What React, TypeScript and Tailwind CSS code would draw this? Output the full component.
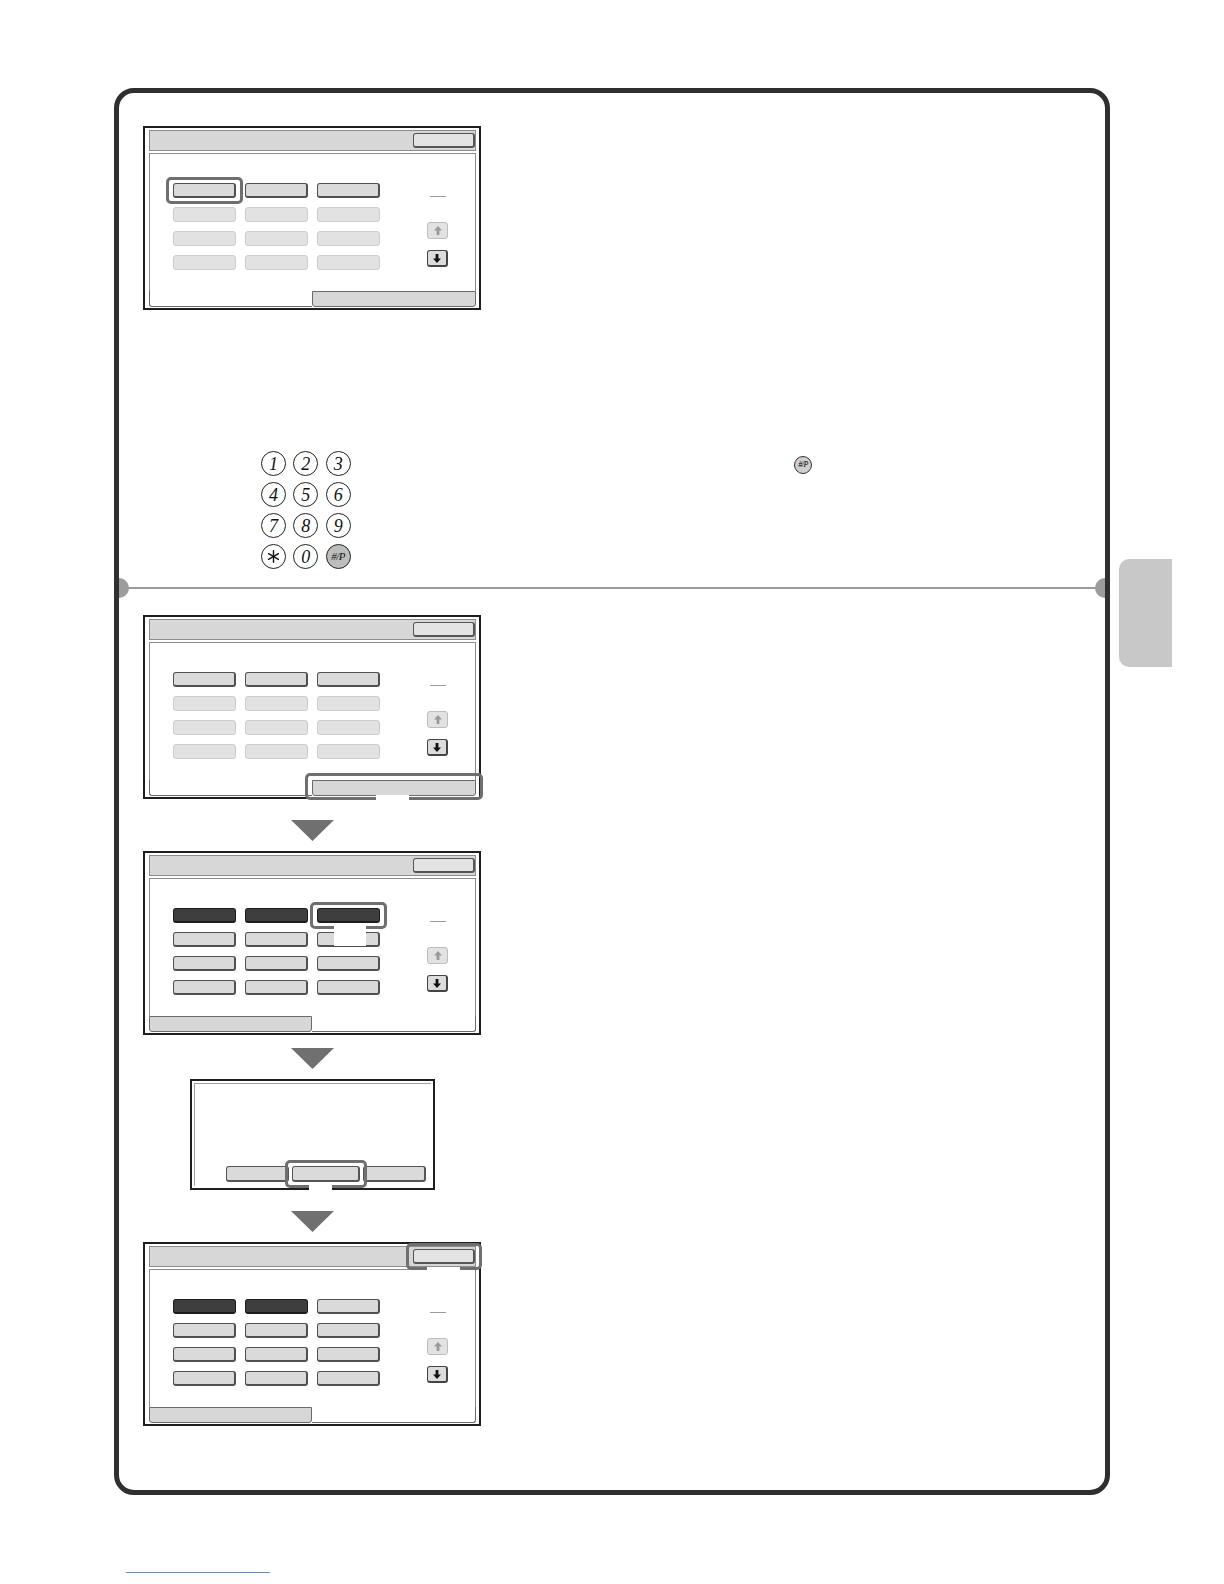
import React from 'react';

type BtnKind = 'normal' | 'faded' | 'dark';
type Highlight = 'none' | 'first' | 'third' | 'tab' | 'header';

const serif = { fontFamily: '"Liberation Serif", "DejaVu Serif", serif' };

function Arrow({ dir, faded }: { dir: 'up' | 'down'; faded?: boolean }) {
  const color = faded ? '#9a9a9a' : '#111';
  return (
    <svg width="8" height="9" viewBox="0 0 8 9" className="block">
      {dir === 'up' ? (
        <path d="M4 0 L8 4.5 H5.4 V9 H2.6 V4.5 H0 Z" fill={color} />
      ) : (
        <path d="M4 9 L8 4.5 H5.4 V0 H2.6 V4.5 H0 Z" fill={color} />
      )}
    </svg>
  );
}

function Key({ kind }: { kind: BtnKind }) {
  if (kind === 'dark')
    return <div className="h-[15px] w-[63px] rounded-[3px] border border-[#1c1c1c] border-b-2 bg-[#3e3e3e]" />;
  if (kind === 'faded')
    return <div className="h-[15px] w-[63px] rounded-[3px] border border-[#cdcdcd] bg-[#e2e2e2]" />;
  return <div className="h-[15px] w-[63px] rounded-[3px] border border-[#505050] border-b-2 border-r-2 bg-[#dadada]" />;
}

function HighlightBox({ gap }: { gap?: { left: number; width: number } }) {
  return (
    <>
      <div className="pointer-events-none absolute -inset-x-[7px] -inset-y-[6px] z-10 rounded-[5px] border-[3px] border-[#6f6f6f]" />
      {gap && (
        <div
          className="absolute -bottom-[10px] z-10 h-[7px] bg-white"
          style={{ left: gap.left, width: gap.width }}
        />
      )}
    </>
  );
}

function Screen({
  rows,
  leftTabActive,
  highlight = 'none',
}: {
  rows: BtnKind[][];
  leftTabActive: boolean;
  highlight?: Highlight;
}) {
  return (
    <div className="flex h-[184px] w-[338px] flex-col border-2 border-[#1e1e1e] bg-white pb-[1px] pl-[4px] pr-[3px] pt-[2px]">
      {/* title bar */}
      <div className="flex h-[21px] shrink-0 items-center justify-end border border-[#8c8c8c] bg-[#d7d7d7]">
        <div className="relative">
          <div className="h-[15px] w-[62px] rounded-[3px] border border-[#555] border-b-2 border-r-2 bg-[#e3e3e3]" />
          {highlight === 'header' && <HighlightBox gap={{ left: 14, width: 33 }} />}
        </div>
      </div>
      {/* content */}
      <div className="mt-[2px] flex flex-1 items-start border-x border-t border-[#8c8c8c] pl-[23px] pt-[29px]">
        <div className="flex flex-col gap-[9px]">
          {rows.map((row, r) => (
            <div key={r} className="flex gap-[9px]">
              {row.map((k, c) => (
                <div key={c} className="relative">
                  <Key kind={k} />
                  {highlight === 'first' && r === 0 && c === 0 && <HighlightBox />}
                  {highlight === 'third' && r === 0 && c === 2 && (
                    <>
                      <HighlightBox />
                      <div className="absolute left-[17px] top-[18px] z-20 h-[20px] w-[32px] bg-white" />
                    </>
                  )}
                </div>
              ))}
            </div>
          ))}
        </div>
        <div className="ml-[47px] flex w-[21px] flex-col items-center pt-[13px]">
          <div className="h-px w-[16px] bg-[#9a9a9a]" />
          <div className="mt-[25px] flex h-[17px] w-[21px] items-center justify-center rounded-[3px] border border-[#bdbdbd] bg-[#e2e2e2]">
            <Arrow dir="up" faded />
          </div>
          <div className="mt-[11px] flex h-[17px] w-[21px] items-center justify-center rounded-[3px] border border-[#444] border-b-2 border-r-2 bg-[#dcdcdc]">
            <Arrow dir="down" />
          </div>
        </div>
      </div>
      {/* tabs */}
      <div className="flex h-[16px] shrink-0">
        <div
          className={
            leftTabActive
              ? 'w-[163px] rounded-bl-[3px] border-b border-l border-[#6a6a6a] bg-white'
              : 'w-[163px] rounded-b-[3px] border border-[#6a6a6a] bg-[#d7d7d7]'
          }
        />
        <div className="relative flex-1">
          <div
            className={
              leftTabActive
                ? 'h-full rounded-b-[3px] border border-[#6a6a6a] bg-[#d7d7d7]'
                : 'h-full rounded-br-[3px] border-b border-r border-[#6a6a6a] bg-white'
            }
          />
          {highlight === 'tab' && (
            <>
              <div className="pointer-events-none absolute -inset-x-[7px] -top-[7px] -bottom-[4px] rounded-[5px] border-[3px] border-[#6f6f6f]" />
              <div className="absolute -bottom-[7px] left-[64px] h-[8px] w-[33px] bg-white" />
            </>
          )}
        </div>
      </div>
    </div>
  );
}

function DownTriangle() {
  return (
    <svg width="43" height="21" viewBox="0 0 43 21" className="block">
      <polygon points="0,0 43,0 21.5,21" fill="#707070" />
    </svg>
  );
}

function Dialog() {
  return (
    <div className="h-[111px] w-[245px] border-2 border-[#1e1e1e] bg-white p-[2px]">
      <div className="flex h-full flex-col justify-end border-l border-t border-[#a0a0a0] pb-[4px] pr-[5px]">
        <div className="flex justify-end gap-[3px]">
          <div className="h-[16px] w-[63px] rounded-[3px] border border-[#555] border-b-2 border-r-2 bg-[#dadada]" />
          <div className="relative">
            <div className="h-[16px] w-[68px] rounded-[3px] border border-[#555] border-b-2 border-r-2 bg-[#dadada]" />
            <HighlightBox gap={{ left: 17, width: 23 }} />
          </div>
          <div className="h-[16px] w-[63px] rounded-[3px] border border-[#555] border-b-2 border-r-2 bg-[#dadada]" />
        </div>
      </div>
    </div>
  );
}

function KeyCircle({ label, gray }: { label: React.ReactNode; gray?: boolean }) {
  return (
    <div
      className={`flex h-[25px] w-[25px] items-center justify-center rounded-full border-[1.5px] border-[#222] text-[18px] italic leading-none text-[#111] ${
        gray ? 'bg-[#bdbdbd]' : 'bg-white'
      }`}
      style={serif}
    >
      {label}
    </div>
  );
}

function Star() {
  return (
    <svg width="13" height="13" viewBox="0 0 13 13" stroke="#111" strokeWidth="1.4" strokeLinecap="round" className="block">
      <line x1="6.5" y1="0.8" x2="6.5" y2="12.2" />
      <line x1="1.6" y1="3.7" x2="11.4" y2="9.3" />
      <line x1="1.6" y1="9.3" x2="11.4" y2="3.7" />
    </svg>
  );
}

function HashP({ size }: { size: 'sm' | 'lg' }) {
  return (
    <span className={size === 'lg' ? 'text-[11px] tracking-[-0.5px]' : 'text-[8px] tracking-[-0.5px]'} style={serif}>
      <i>#/P</i>
    </span>
  );
}

const normalRow: BtnKind[] = ['normal', 'normal', 'normal'];
const fadedRow: BtnKind[] = ['faded', 'faded', 'faded'];
const darkRow: BtnKind[] = ['dark', 'dark', 'dark'];

export default function App() {
  const keys: React.ReactNode[] = ['1', '2', '3', '4', '5', '6', '7', '8', '9', <Star key="s" />, '0'];

  return (
    <div className="flex h-[1584px] w-[1224px] flex-col overflow-hidden bg-white pl-[114px] pt-[88px]">
      <div className="flex items-start">
        {/* main frame */}
        <div className="relative h-[1407px] w-[996px] shrink-0 rounded-[20px] border-[5px] border-[#2f2f2f] bg-white">
          {/* step 1 */}
          <div className="flex h-[494px] flex-col pl-[24px] pt-[33px]">
            <Screen rows={[normalRow, fadedRow, fadedRow, fadedRow]} leftTabActive highlight="first" />
            <div className="mt-[141px] flex items-start">
              <div className="ml-[118px] grid w-[90px] grid-cols-3 gap-x-[7px] gap-y-[6px]">
                {keys.map((k, i) => (
                  <KeyCircle key={i} label={k} />
                ))}
                <KeyCircle label={<HashP size="lg" />} gray />
              </div>
              <div className="ml-[443px] mt-[5px] flex h-[18px] w-[18px] items-center justify-center rounded-full border border-[#333] bg-[#cfcfcf]">
                <HashP size="sm" />
              </div>
            </div>
          </div>

          {/* divider */}
          <div className="relative h-[2px] bg-[#9c9c9c]">
            <div className="absolute left-0 top-[-9px] h-[20px] w-[10px] rounded-r-full bg-[#9c9c9c]" />
            <div className="absolute right-0 top-[-9px] h-[20px] w-[10px] rounded-l-full bg-[#9c9c9c]" />
          </div>

          {/* step 2 */}
          <div className="ml-[24px] flex w-[338px] flex-col items-center pt-[26px]">
            <Screen rows={[normalRow, fadedRow, fadedRow, fadedRow]} leftTabActive highlight="tab" />
            <div className="mt-[21px]">
              <DownTriangle />
            </div>
            <div className="mt-[10px]">
              <Screen rows={[darkRow, normalRow, normalRow, normalRow]} leftTabActive={false} highlight="third" />
            </div>
            <div className="mt-[13px]">
              <DownTriangle />
            </div>
            <div className="mt-[10px]">
              <Dialog />
            </div>
            <div className="mt-[21px]">
              <DownTriangle />
            </div>
            <div className="mt-[10px]">
              <Screen rows={[['dark', 'dark', 'normal'], normalRow, normalRow, normalRow]} leftTabActive={false} highlight="header" />
            </div>
          </div>
        </div>

        {/* side tab */}
        <div className="ml-[9px] mt-[471px] h-[108px] w-[53px] shrink-0 rounded-l-[10px] bg-[#c8c8c8]" />
      </div>

      <div className="ml-[12px] mt-[77px] h-px w-[144px] shrink-0 bg-[#6a86d0]" />
    </div>
  );
}
